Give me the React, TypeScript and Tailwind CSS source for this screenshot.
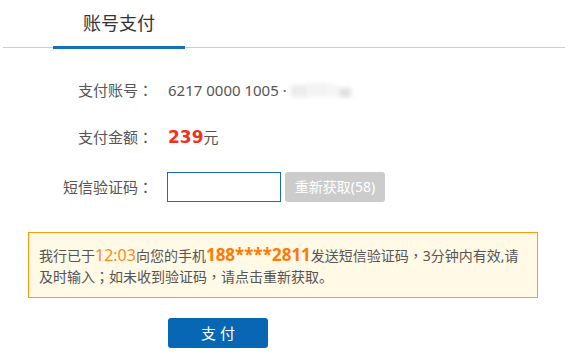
import React from "react";

function Label({ text }: { text: string }) {
  return (
    <div className="w-[153px] text-right text-[15px] text-[#555555] leading-none">
      {text}
      <span className="font-['Noto_Sans_CJK_TC',sans-serif]">：</span>
    </div>
  );
}

function P({ c }: { c: string }) {
  return <span className="font-['Noto_Sans_CJK_TC',sans-serif]">{c}</span>;
}

export default function App() {
  return (
    <div className="w-[568px] h-[358px] overflow-hidden bg-white font-['Noto_Sans','Noto_Sans_CJK_SC',sans-serif]">
      {/* Tabs header */}
      <div className="mx-[3px] h-[48px] flex items-start border-b border-[#cccccc]">
        <div className="ml-[50px] w-[132px] h-[49px] shrink-0 border-b-[3px] border-[#1570b8] flex items-center justify-center text-[18px] text-[#333333] leading-none">
          账号支付
        </div>
      </div>

      {/* Row 1 */}
      <div className="mt-[27px] h-[30px] flex items-center">
        <Label text="支付账号" />
        <div className="ml-[15px] flex items-center text-[15px] text-[#555555] leading-none">
          <span>6217 0000 1005 ·</span>
          <span className="relative ml-[2px] inline-block w-[64px] h-[17px]">
            <span className="absolute left-[2px] top-[3px] w-[18px] h-[12px] bg-[#ececec] blur-[2px]"></span>
            <span className="absolute left-[18px] top-[1px] w-[22px] h-[14px] bg-[#f3f3f3] blur-[2px]"></span>
            <span className="absolute left-[38px] top-[3px] w-[12px] h-[11px] bg-[#f5f5f5] blur-[2px]"></span>
            <span className="absolute left-[50px] top-[6px] w-[12px] h-[9px] bg-[#e0e0e0] blur-[2px]"></span>
          </span>
        </div>
      </div>

      {/* Row 2 */}
      <div className="mt-[17px] h-[30px] flex items-center">
        <Label text="支付金额" />
        <div className="ml-[15px] text-[#555555] leading-none">
          <span className="font-['DejaVu_Sans',sans-serif] font-bold text-[17px] text-[#f2311c]">239</span>
          <span className="text-[15px]">元</span>
        </div>
      </div>

      {/* Row 3 */}
      <div className="mt-[20px] h-[30px] flex items-center">
        <Label text="短信验证码" />
        <input
          type="text"
          className="ml-[14px] w-[114px] h-[30px] border border-[#1a6cb5] bg-white outline-none px-[4px] text-[14px]"
        />
        <button className="ml-[4px] w-[100px] h-[30px] rounded-[3px] bg-[#cccccc] text-white text-[14px] leading-none flex items-center justify-center">
          重新获取(58)
        </button>
      </div>

      {/* Notice */}
      <div className="mt-[30px] ml-[28px] w-[510px] h-[66px] border border-[#ff9a0a] bg-[#fff9e6] px-[10px] pt-[12px] text-[14px] leading-[21px] text-[#555555]">
        <div className="whitespace-nowrap">
          我行已于<span className="text-[16px] leading-none text-[#ff8a1a]">12:03</span>向您的手机<span className="text-[17px] leading-none font-bold text-[#ff7a00]">188****2811</span>发送短信验证码<P c="，" />3分钟内有效,请
        </div>
        <div className="whitespace-nowrap">
          及时输入<P c="；" />如未收到验证码<P c="，" />请点击重新获取。
        </div>
      </div>

      {/* Pay button */}
      <button className="mt-[20px] ml-[168px] w-[100px] h-[30px] rounded-[3px] bg-[#0767b4] text-white text-[15px] leading-none flex items-center justify-center">
        支 付
      </button>
    </div>
  );
}
